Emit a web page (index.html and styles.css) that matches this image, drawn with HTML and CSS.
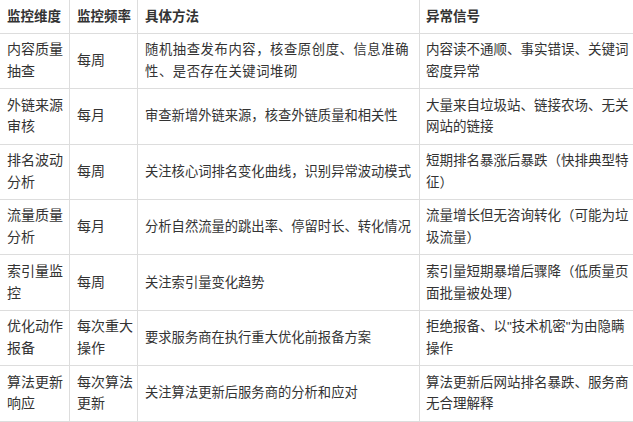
FILE: index.html
```html
<!DOCTYPE html>
<html lang="zh-CN">
<head>
<meta charset="utf-8">
<title>监控维度</title>
<link rel="stylesheet" href="styles.css">
</head>
<body>
<table class="grid">
  <thead>
    <tr>
      <th class="c1">监控维度</th>
      <th class="c2">监控频率</th>
      <th class="c3">具体方法</th>
      <th class="c4">异常信号</th>
    </tr>
  </thead>
  <tbody>
    <tr>
      <td class="dim">内容质量抽查</td>
      <td class="freq">每周</td>
      <td class="method wide">随机抽查发布内容，核查原创度、信息准确性、是否存在关键词堆砌</td>
      <td class="sig">内容读不通顺、事实错误、关键词密度异常</td>
    </tr>
    <tr>
      <td class="dim">外链来源审核</td>
      <td class="freq">每月</td>
      <td class="method">审查新增外链来源，核查外链质量和相关性</td>
      <td class="sig">大量来自垃圾站、链接农场、无关网站的链接</td>
    </tr>
    <tr>
      <td class="dim">排名波动分析</td>
      <td class="freq">每周</td>
      <td class="method">关注核心词排名变化曲线，识别异常波动模式</td>
      <td class="sig">短期排名暴涨后暴跌（快排典型特征）</td>
    </tr>
    <tr>
      <td class="dim">流量质量分析</td>
      <td class="freq">每月</td>
      <td class="method">分析自然流量的跳出率、停留时长、转化情况</td>
      <td class="sig">流量增长但无咨询转化（可能为垃圾流量）</td>
    </tr>
    <tr>
      <td class="dim">索引量监控</td>
      <td class="freq">每周</td>
      <td class="method">关注索引量变化趋势</td>
      <td class="sig">索引量短期暴增后骤降（低质量页面批量被处理）</td>
    </tr>
    <tr>
      <td class="dim">优化动作报备</td>
      <td class="freq">每次重大操作</td>
      <td class="method">要求服务商在执行重大优化前报备方案</td>
      <td class="sig">拒绝报备、以"技术机密"为由隐瞒操作</td>
    </tr>
    <tr>
      <td class="dim">算法更新响应</td>
      <td class="freq">每次算法更新</td>
      <td class="method">关注算法更新后服务商的分析和应对</td>
      <td class="sig">算法更新后网站排名暴跌、服务商无合理解释</td>
    </tr>
  </tbody>
</table>
</body>
</html>
```
FILE: styles.css
```css
html, body {
  margin: 0;
  padding: 0;
  background: #ffffff;
}

body {
  font-family: "Liberation Sans", "Noto Sans CJK SC", sans-serif;
  font-size: 13.5px;
  color: #333333;
  overflow: hidden;
}

.grid {
  table-layout: fixed;
  border-collapse: separate;
  border-spacing: 0;
  width: 650px;
}

.grid th,
.grid td {
  box-sizing: border-box;
  border-right: 1px solid #dddddd;
  border-bottom: 1px solid #dddddd;
  padding: 5.5px 4px 5.5px 7px;
  line-height: 21.7px;
  text-align: left;
  vertical-align: middle;
  word-break: break-all;
}

.grid th {
  font-weight: bold;
  font-size: 13.5px;
}

.grid .c1 { width: 70px; }
.grid .c2 { width: 68px; }
.grid .c3 { width: 282px; }
.grid .c4 { width: 230px; }

.grid th.c2,
.grid td.freq {
  padding-left: 7px;
  padding-right: 3px;
}

.grid td.dim,
.grid td.freq {
  font-size: 14px;
}

.grid td.method {
  font-size: 13.3px;
  padding-left: 7px;
  padding-right: 3px;
}

.grid td.method.wide {
  letter-spacing: 0.6px;
}

.grid th.c4,
.grid td.sig {
  padding-left: 6px;
}

.grid td.sig {
  font-size: 13.5px;
  padding-right: 18px;
}
```
